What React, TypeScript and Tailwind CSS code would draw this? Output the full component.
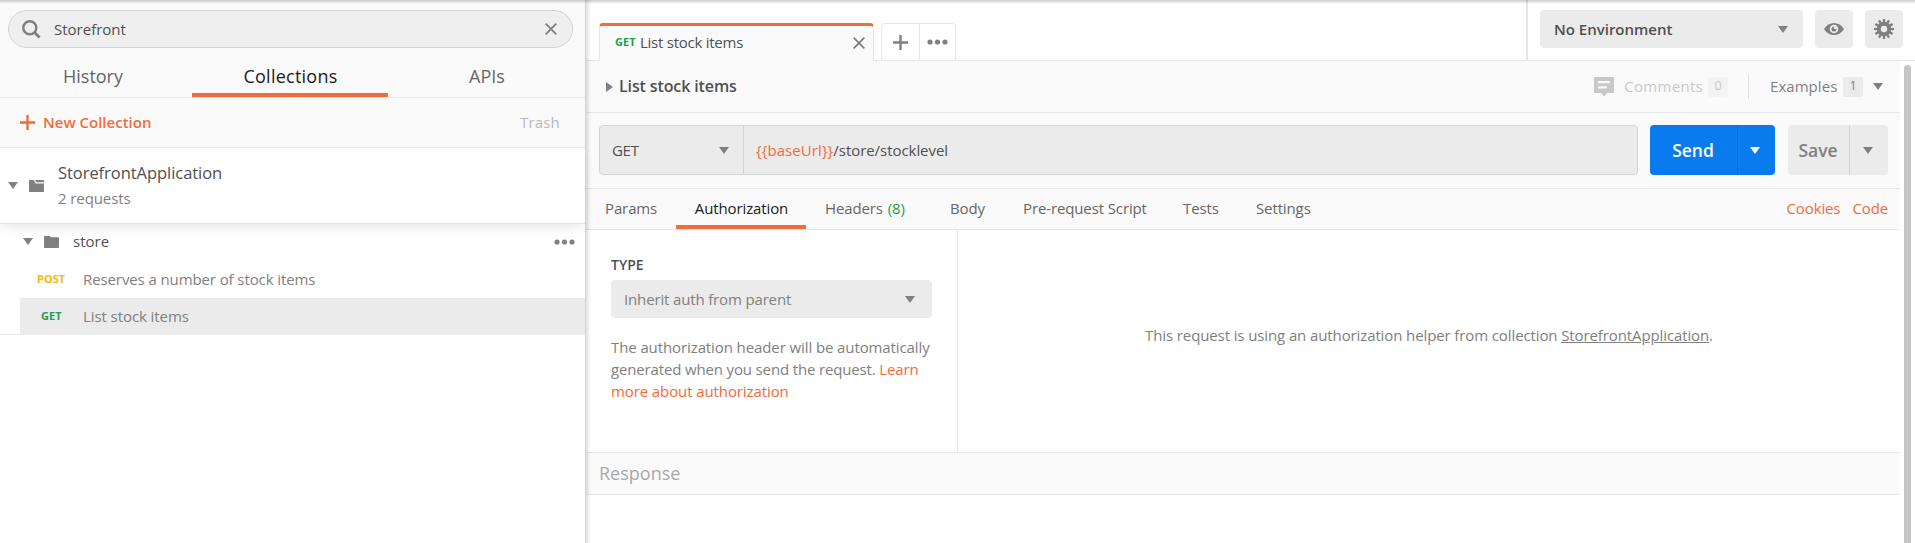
import React from 'react';

type CaretProps = { className?: string };

function Caret({ className = 'text-[#808080]' }: CaretProps) {
  return (
    <svg width="10" height="7" viewBox="0 0 10 7" className={`shrink-0 ${className}`} fill="currentColor">
      <path d="M0 0h10L5 7z" />
    </svg>
  );
}

function Dots() {
  return (
    <svg width="21" height="6" viewBox="0 0 21 6" fill="#808080" className="shrink-0">
      <circle cx="3" cy="3" r="2.6" />
      <circle cx="10.5" cy="3" r="2.6" />
      <circle cx="18" cy="3" r="2.6" />
    </svg>
  );
}

function Cross() {
  return (
    <svg width="12" height="12" viewBox="0 0 12 12" stroke="#808080" strokeWidth="1.8" className="shrink-0">
      <path d="M.7.7l10.6 10.6M11.3.7L.7 11.3" />
    </svg>
  );
}

function Plus({ color }: { color: string }) {
  return (
    <svg width="15" height="15" viewBox="0 0 15 15" stroke={color} strokeWidth="2.4" className="shrink-0">
      <path d="M7.5 0v15M0 7.5h15" />
    </svg>
  );
}

function Folder({ collection = false }: { collection?: boolean }) {
  return (
    <svg width="15" height="12" viewBox="0 0 15 12" fill="#808080" className="shrink-0">
      {collection ? (
        <path d="M0 .8Q0 0 .8 0H4.600L6.300 2.600V3.500H15V11.200Q15 12 14.200 12H.8Q0 12 0 11.200zM6 0H14.200Q15 0 15 .8V2.300H7.300z" />
      ) : (
        <path d="M0 .8Q0 0 .8 0H5.500L7 1.200H14.200Q15 1.200 15 2V11.200Q15 12 14.200 12H.8Q0 12 0 11.200z" />
      )}
    </svg>
  );
}

function CommentIcon() {
  return (
    <svg width="20" height="20" viewBox="0 0 20 20" fill="#c8c8c8" className="shrink-0">
      <path
        fillRule="evenodd"
        d="M1 0H19Q20 0 20 1V15Q20 16 19 16H13L10 19.500L7 16H1Q0 16 0 15V1Q0 0 1 0zM4 4V6.200H16V4zM4 9.200V11.400H13V9.200z"
      />
    </svg>
  );
}

function Eye() {
  return (
    <svg width="20" height="12" viewBox="0 0 20 12" className="shrink-0">
      <path d="M0 6C2.500 2 6 0 10 0s7.500 2 10 6c-2.500 4-6 6-10 6S2.500 10 0 6z" fill="#808080" />
      <circle cx="10" cy="6" r="4.300" fill="#ebebeb" />
      <circle cx="10" cy="6" r="2.500" fill="#808080" />
      <path d="M10 6V3.300A2.700 2.700 0 0 1 12.700 6z" fill="#ebebeb" />
    </svg>
  );
}

const GEAR_ANGLES = [0, 30, 60, 90, 120, 150];

function Gear() {
  return (
    <svg width="20" height="20" viewBox="0 0 20 20" className="shrink-0">
      {GEAR_ANGLES.map((angle) => (
        <path key={angle} d="M8.900 0H11.100L11.600 10L11.100 20H8.900L8.400 10z" fill="#808080" transform={`rotate(${angle} 10 10)`} />
      ))}
      <circle cx="10" cy="10" r="7.200" fill="#808080" />
      <circle cx="10" cy="10" r="3.200" fill="#ebebeb" />
    </svg>
  );
}

function Sidebar() {
  return (
    <aside className="flex h-full w-[586px] shrink-0 flex-col border-r border-[#d4d4d4] bg-white">
      <div className="h-[98px] border-b border-[#e6e6e6] bg-[#fafafa] pt-[10px]">
        <div className="ml-2 flex h-[38px] w-[565px] items-center rounded-full border border-[#d4d4d4] bg-[#efefef] pr-[15px] pl-[13px]">
          <svg width="19" height="19" viewBox="0 0 19 19" fill="none" stroke="#808080" className="shrink-0">
            <circle cx="7.800" cy="7.800" r="6.500" strokeWidth="2.400" />
            <path d="M12.300 12.300L17.600 17.600" strokeWidth="2.800" />
          </svg>
          <span className="ml-[13px] grow text-[#505050]">Storefront</span>
          <Cross />
        </div>
        <div className="flex h-[49px] text-lg text-[#666]">
          <div className="flex w-[192px] justify-center pt-4 pr-[6px] leading-6">History</div>
          <div className="flex w-[196px] justify-center border-b-4 border-[#f26b3a] pt-4 pl-px leading-6 tracking-[0.25px] text-[#1a1a1a]">
            Collections
          </div>
          <div className="flex w-[197px] justify-center pt-4 pl-px leading-6">APIs</div>
        </div>
      </div>

      <div className="flex h-[50px] items-center border-b border-[#e6e6e6] bg-[#fafafa] pr-[25px] pl-5">
        <Plus color="#f26b3a" />
        <span className="ml-2 grow font-semibold text-[#f26b3a]">New Collection</span>
        <span className="tracking-[0.2px] text-[#b8b8b8]">Trash</span>
      </div>

      <div className="relative flex h-[76px] shrink-0 items-center border-b border-[#e4e4e4] pl-2 shadow-[0_6px_12px_-4px_rgba(0,0,0,0.12)]">
        <Caret />
        <span className="ml-[11px]">
          <Folder collection />
        </span>
        <div className="ml-[14px] flex flex-col pb-px">
          <span className="text-[16.5px] leading-[26px] tracking-[-0.05px] text-[#505050]">StorefrontApplication</span>
          <span className="leading-[25px] tracking-[-0.1px] text-[#808080]">2 requests</span>
        </div>
      </div>

      <div className="flex h-[37px] items-center pr-[10px] pb-0.5 pl-[23px]">
        <Caret />
        <span className="ml-[11px]">
          <Folder />
        </span>
        <span className="ml-[14px] grow text-[#505050]">store</span>
        <Dots />
      </div>
      <div className="flex h-[37px] items-center pl-5 text-[#808080]">
        <span className="w-[63px] pl-[17px] text-[11px] font-bold text-[#ffb400]">POST</span>
        <span className="tracking-[-0.1px]">Reserves a number of stock items</span>
      </div>
      <div className="flex h-[37px] border-b border-[#e6e6e6]">
        <div className="-mb-px ml-5 flex grow items-center bg-[#ebebeb] text-[#808080]">
          <span className="w-[63px] pl-[21px] text-[11px] font-bold text-[#249d4c]">GET</span>
          <span className="tracking-[-0.08px]">List stock items</span>
        </div>
      </div>
    </aside>
  );
}

function TopBar() {
  return (
    <header className="flex h-[61px] shrink-0 text-[#505050]">
      <div className="flex grow items-end">
        <div className="h-px w-[13px] bg-[#e6e6e6]" />
        <div className="flex h-[38px] w-[275px] items-center rounded-t border-x border-t-[3px] border-x-[#e6e6e6] border-t-[#f26b3a] bg-[#fafafa] pr-[8px] pb-0.5 pl-[15px]">
          <span className="w-[25px] text-[11px] font-bold text-[#249d4c]">GET</span>
          <span className="grow tracking-[-0.25px]">List stock items</span>
          <Cross />
        </div>
        <div className="h-px w-[7px] bg-[#e6e6e6]" />
        <div className="flex h-[38px] w-[75px] rounded-t border border-[#e6e6e6]">
          <div className="flex w-[38px] items-center justify-center border-r border-[#e6e6e6]">
            <Plus color="#808080" />
          </div>
          <div className="flex grow items-center justify-center">
            <Dots />
          </div>
        </div>
        <div className="h-px grow bg-[#e6e6e6]" />
      </div>
      <div className="flex w-[389px] shrink-0 gap-3 border-b border-l-2 border-[#e6e6e6] pt-[10px] pl-3">
        <div className="flex h-[38px] w-[263px] items-center justify-between rounded bg-[#ebebeb] pr-[15px] pl-[14px] font-semibold">
          No Environment
          <Caret />
        </div>
        <div className="flex size-[38px] items-center justify-center rounded bg-[#ebebeb]">
          <Eye />
        </div>
        <div className="flex size-[38px] items-center justify-center rounded bg-[#ebebeb]">
          <Gear />
        </div>
      </div>
    </header>
  );
}

function TitleRow() {
  return (
    <div className="flex h-[52px] shrink-0 items-center border-b border-[#e6e6e6] bg-[#fafafa] pl-5">
      <svg width="7" height="10" viewBox="0 0 7 10" fill="#808080">
        <path d="M0 0L7 5L0 10z" />
      </svg>
      <span className="ml-[6px] grow pb-0.5 text-base font-semibold tracking-[-0.12px] text-[#505050]">List stock items</span>
      <CommentIcon />
      <span className="ml-[10px] tracking-[0.3px] text-[#c8c8c8]">Comments</span>
      <span className="ml-[5px] flex h-5 w-5 items-center justify-center rounded-xs bg-[#f3f3f3] text-[12.5px] text-[#c8c8c8]">0</span>
      <div className="ml-5 h-[25px] w-px bg-[#e0e0e0]" />
      <span className="ml-[21px] w-[73px] tracking-[0.05px] text-[#808080]">Examples</span>
      <span className="mr-[10px] flex h-5 w-5 items-center justify-center rounded-xs bg-[#ebebeb] text-[12.5px] text-[#808080]">1</span>
      <Caret className="mr-[17px] text-[#808080]" />
    </div>
  );
}

function RequestBar() {
  return (
    <div className="flex h-[76px] shrink-0 border-b border-[#e6e6e6] bg-[#fafafa] pt-3 pl-[13px]">
      <div className="flex h-[50px] w-[1039px] rounded border border-[#d4d4d4] bg-[#ebebeb] text-[#505050]">
        <div className="flex w-[144px] items-center justify-between border-r border-[#d4d4d4] pr-[14px] pl-3 tracking-[-0.3px]">
          GET
          <Caret />
        </div>
        <div className="flex items-center pl-3">
          <span className="tracking-[0.08px] text-[#f26b3a]">{'{{baseUrl}}'}</span>
          <span className="tracking-[-0.05px]">/store/stocklevel</span>
        </div>
      </div>
      <div className="ml-3 flex h-[50px] w-[125px] items-center rounded bg-[#097bed] text-[17.5px] font-semibold text-white">
        <div className="flex h-full w-[88px] items-center justify-center border-r border-[#0a6fd3] pr-px">Send</div>
        <div className="flex grow items-center justify-center pr-1">
          <Caret className="text-white" />
        </div>
      </div>
      <div className="ml-[13px] flex h-[50px] w-[100px] items-center rounded bg-[#ebebeb] text-[17.5px] font-semibold text-[#808080]">
        <div className="flex h-full w-[62px] items-center justify-center border-r border-[#d4d4d4] pr-px">Save</div>
        <div className="flex grow items-center justify-center pr-0.5">
          <Caret />
        </div>
      </div>
    </div>
  );
}

function RequestTabs() {
  return (
    <nav className="flex h-[41px] shrink-0 border-b border-[#e6e6e6] bg-[#fafafa] tracking-[-0.12px] text-[#666]">
      <div className="w-[90px] pt-[7px] pl-[19px] leading-6">Params</div>
      <div className="w-[130px] border-b-4 border-[#f26b3a] pt-[7px] pl-px text-center leading-6 text-[#1a1a1a]">Authorization</div>
      <div className="w-[144px] pt-[7px] pl-[19px] leading-6">
        Headers <span className="ml-px text-[#249d4c]">(8)</span>
      </div>
      <div className="w-[73px] pt-[7px] leading-6">Body</div>
      <div className="w-[160px] pt-[7px] leading-6">Pre-request Script</div>
      <div className="w-[73px] pt-[7px] leading-6">Tests</div>
      <div className="grow pt-[7px] leading-6">Settings</div>
      <div className="pt-[7px] pr-[12px] leading-6 text-[#f26b3a]">Cookies</div>
      <div className="pt-[7px] pr-[12px] leading-6 text-[#f26b3a]">Code</div>
    </nav>
  );
}

function AuthPanel() {
  return (
    <div className="flex h-[222px] shrink-0 text-[#808080]">
      <div className="w-[372px] border-r border-[#e6e6e6] pt-[25px] pl-[25px]">
        <div className="h-[25px] text-sm leading-5 font-semibold text-[#505050]">TYPE</div>
        <div className="flex h-[38px] w-[321px] items-center justify-between rounded bg-[#ebebeb] pr-[17px] pl-[13px] tracking-[-0.15px]">
          Inherit auth from parent
          <Caret />
        </div>
        <p className="mt-[18px] leading-[22px] tracking-[-0.1px] whitespace-nowrap">
          The authorization header will be automatically
          <br />
          <span className="tracking-[-0.15px]">
            generated when you send the request. <span className="text-[#f26b3a]">Learn</span>
          </span>
          <br />
          <span className="text-[#f26b3a]">more about authorization</span>
        </p>
      </div>
      <div className="flex grow items-center justify-center pb-3 tracking-[-0.11px]">
        <p>
          This request is using an authorization helper from collection <span className="underline">StorefrontApplication</span>.
        </p>
      </div>
    </div>
  );
}

export default function App() {
  return (
    <div className="relative flex h-[543px] w-full overflow-hidden bg-white font-['Open_Sans',sans-serif] text-[15px]">
      <Sidebar />
      <main className="flex grow flex-col">
        <TopBar />
        <div className="flex grow">
          <div className="flex w-[1314px] flex-col">
            <TitleRow />
            <RequestBar />
            <RequestTabs />
            <AuthPanel />
            <div className="flex h-[43px] items-center border-y border-[#e6e6e6] bg-[#fafafa] pb-0.5 pl-[13px] text-lg text-[#a9a9a9]">
              Response
            </div>
          </div>
          <div className="mt-1 ml-1 w-[7px] rounded-t-full bg-[#c5c5c5]" />
        </div>
      </main>
      <div className="absolute inset-y-0 left-[586px] w-[5px] bg-linear-to-r from-black/12 to-transparent" />
      <div className="absolute inset-x-0 top-0 h-1 bg-linear-to-b from-black/20 to-transparent" />
    </div>
  );
}
